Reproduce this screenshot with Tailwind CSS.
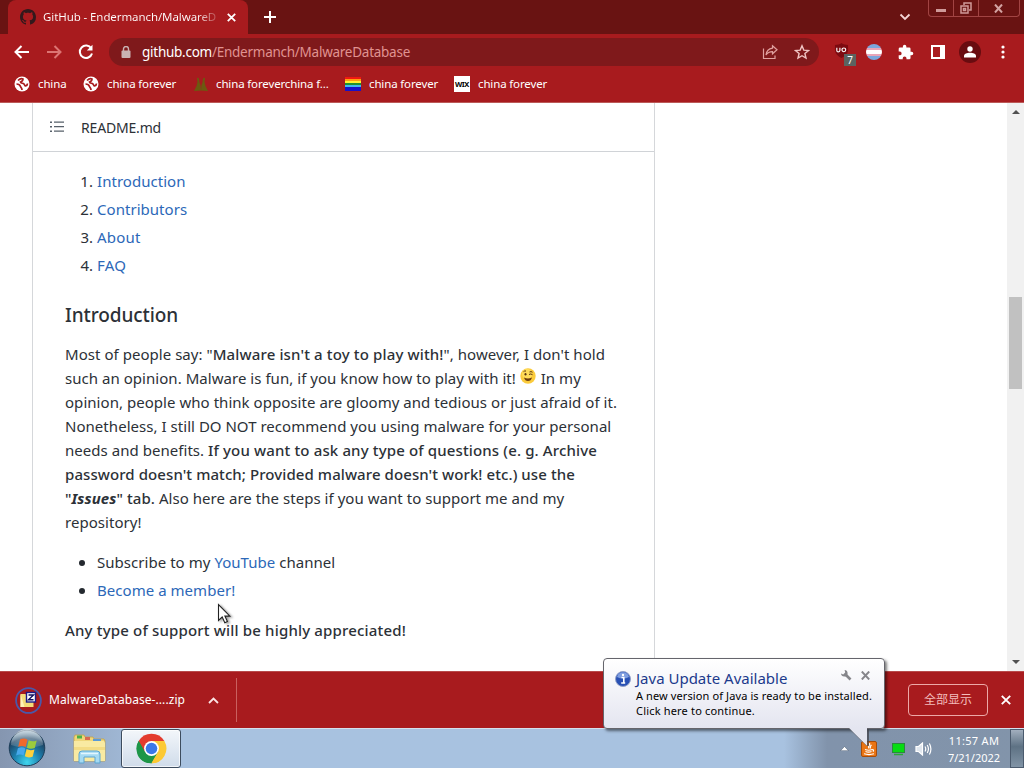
<!DOCTYPE html>
<html lang="en">
<head>
  <meta charset="UTF-8" />
  <meta name="viewport" content="width=device-width, initial-scale=1.0"/>
  <title>GitHub - Endermanch/MalwareDatabase</title>
  <script src="https://cdn.jsdelivr.net/npm/@tailwindcss/browser@4"></script>
</head>
<body class="w-[1024px] h-[768px] overflow-hidden bg-white font-['Noto_Sans','Noto_Sans_CJK_SC',sans-serif]">
  <div class="relative w-[1024px] h-[768px] flex flex-col overflow-hidden">

    <!-- Tab strip -->
    <div class="h-[34px] shrink-0 bg-[#691312] flex justify-between">
      <div class="flex">
        <div class="ml-2 w-[240px] h-[34px] bg-[#a81b1e] rounded-t-lg flex items-center pl-3">
          <svg class="size-4 shrink-0" viewBox="0 0 16 16" fill="#33191c"><path d="M8 0C3.58 0 0 3.58 0 8c0 3.54 2.29 6.53 5.47 7.59.4.07.55-.17.55-.38 0-.19-.01-.82-.01-1.49-2.01.37-2.53-.49-2.69-.94-.09-.23-.48-.94-.82-1.13-.28-.15-.68-.52-.01-.53.63-.01 1.08.58 1.23.82.72 1.21 1.87.87 2.33.66.07-.52.28-.87.51-1.07-1.78-.2-3.64-.89-3.64-3.95 0-.87.31-1.59.82-2.15-.08-.2-.36-1.02.08-2.12 0 0 .67-.21 2.2.82.64-.18 1.32-.27 2-.27s1.36.09 2 .27c1.53-1.04 2.2-.82 2.2-.82.44 1.1.16 1.92.08 2.12.51.56.82 1.27.82 2.15 0 3.07-1.87 3.75-3.65 3.95.29.25.54.73.54 1.48 0 1.07-.01 1.93-.01 2.2 0 .21.15.46.55.38A8.01 8.01 0 0 0 16 8c0-4.42-3.58-8-8-8z"/></svg>
          <div class="ml-[7px] w-[174px] whitespace-nowrap text-[11.5px] tracking-[-0.09px] bg-linear-to-r from-white from-88% to-white/20 bg-clip-text text-transparent">GitHub - Endermanch/MalwareD</div>
          <svg class="ml-[10px] size-[9px]" viewBox="0 0 9 9" stroke="#fff" stroke-width="1.8"><path d="M.8.8l7.4 7.4M8.2.8L.8 8.2"/></svg>
        </div>
        <svg class="ml-4 mt-[11px] size-3" viewBox="0 0 12 12" stroke="#fff" stroke-width="2"><path d="M6 0v12M0 6h12"/></svg>
      </div>
      <div class="flex">
        <svg class="mr-[17px] mt-[13px] w-3 h-[8px]" viewBox="0 0 12 8" fill="none" stroke="#f5d5d5" stroke-width="1.8"><path d="M1.5 1.5L6 6l4.500-4.500"/></svg>
        <div class="mr-1 h-[17px] w-[92px] flex border border-t-0 border-[#a24443] rounded-b">
          <div class="w-[25px] flex items-end justify-center pb-[4px] border-r border-[#a24443]"><div class="w-[10px] h-[3px] bg-[#cf9a99]"></div></div>
          <div class="w-[25px] flex items-center justify-center border-r border-[#a24443]">
            <svg class="size-[12px]" viewBox="0 0 12 12" fill="none" stroke="#cf9a99" stroke-width="1.500"><path d="M4 3V1h7v7H9M1 4h7v7H1zM3.500 6.500h2v2h-2z"/></svg>
          </div>
          <div class="flex-1 flex items-center justify-center pr-[2px]">
            <svg class="w-[9px] h-[9px]" viewBox="0 0 9 9" stroke="#d3a3a2" stroke-width="2"><path d="M1 .5l7 8M8 .5l-7 8"/></svg>
          </div>
        </div>
      </div>
    </div>

    <!-- Toolbar -->
    <div class="h-[36px] shrink-0 bg-[#a81b1e] flex items-center">
      <svg class="ml-[14px] w-[16px] h-[14px]" viewBox="0 0 16 14" fill="none" stroke="#fff" stroke-width="2"><path d="M15 7H2M7.500 1L1.500 7l6 6"/></svg>
      <svg class="ml-4 w-[16px] h-[14px]" viewBox="0 0 16 14" fill="none" stroke="#dc7573" stroke-width="2"><path d="M1 7h13M8.500 1l6 6-6 6"/></svg>
      <svg class="ml-4 size-4" viewBox="0 0 16 16" fill="none" stroke="#fff" stroke-width="2"><path d="M13.300 4.500A6.200 6.200 0 1 0 14 9.500"/><path d="M14.500.8v5.700H8.800z" fill="#fff" stroke="none"/></svg>
      <div class="ml-[15px] w-[710px] h-[28px] rounded-full bg-[#7f191b] flex items-center pl-3">
        <svg class="w-[10px] h-[13px]" viewBox="0 0 10 13"><rect y="4.500" x=".5" width="9" height="7.500" rx="1" fill="#c9b3b3"/><path d="M2.500 5V3a2.500 2.500 0 0 1 5 0v2" fill="none" stroke="#c9b3b3" stroke-width="1.400"/></svg>
        <div class="ml-[11px] text-[13.5px] tracking-[-0.258px] text-[#e09391] whitespace-nowrap grow"><span class="text-white">github.com</span>/Endermanch/MalwareDatabase</div>
        <svg class="size-4" viewBox="0 0 16 16" fill="none" stroke="#e0a09f" stroke-width="1.200"><path d="M1.500 4.500v10h11.500v-3"/><path d="M10.500 1.800l4.500 4-4.500 4V7.600C7.500 7.600 5.500 8.500 4 11c.4-3.500 2.500-6.200 6.500-6.800z"/></svg>
        <svg class="ml-4 mr-[9px] size-4" viewBox="0 0 16 16" fill="none" stroke="#f0c4c3" stroke-width="1.400"><path d="M8 1.800l1.800 4.300 4.700.4-3.600 3 1.100 4.600L8 11.700l-4 2.400 1.100-4.600-3.600-3 4.700-.4z"/></svg>
      </div>
      <div class="relative ml-[15px] size-[18px]">
        <svg class="size-[15px]" viewBox="0 0 16 16"><path d="M8 0c2 1.500 4.500 2 7 2v5c0 4.500-3 7-7 9-4-2-7-4.500-7-9V2c2.500 0 5-.5 7-2z" fill="#7d0a10"/><path d="M3 5v3q0 1.500 1.500 1.500T6.300 8V5" fill="none" stroke="#fff" stroke-width="1.200"/><circle cx="10.500" cy="7.300" r="2" fill="none" stroke="#fff" stroke-width="1.200"/></svg>
        <div class="absolute left-[10px] top-[11px] w-[12px] h-[12px] bg-[#5b6360] text-white text-[10px] leading-[12px] text-center">7</div>
      </div>
      <div class="ml-[14px] size-4 rounded-full overflow-hidden flex flex-col">
        <div class="flex-[4] bg-[#7ba6dc]"></div><div class="flex-[2] bg-[#e8a4b8]"></div><div class="flex-[3] bg-white"></div><div class="flex-[2] bg-[#e8a4b8]"></div><div class="flex-[4] bg-[#7ba6dc]"></div>
      </div>
      <svg class="ml-[16px] size-[16px]" viewBox="1 0 23 23" fill="#fff"><path d="M20.500 11H19V7a2 2 0 0 0-2-2h-4V3.500a2.500 2.500 0 0 0-5 0V5H4a2 2 0 0 0-2 2v3.800h1.500a2.700 2.700 0 0 1 0 5.400H2V20a2 2 0 0 0 2 2h3.800v-1.500a2.700 2.700 0 0 1 5.400 0V22H17a2 2 0 0 0 2-2v-4h1.500a2.500 2.500 0 0 0 0-5z"/></svg>
      <div class="ml-[17px] w-[14px] h-[14px] border-2 border-r-[5px] border-white"></div>
      <div class="ml-[14px] size-[22px] rounded-full bg-[#690c10] flex items-center justify-center">
        <svg class="size-[12px]" viewBox="0 0 12 12" fill="#fff"><circle cx="6" cy="3" r="2.700"/><path d="M0 11.500V10c0-2 3-3.200 6-3.200s6 1.200 6 3.200v1.500z"/></svg>
      </div>
      <svg class="ml-[20px] w-[4px] h-[14px]" viewBox="0 0 4 14" fill="#fff"><circle cx="2" cy="2" r="1.600"/><circle cx="2" cy="7" r="1.600"/><circle cx="2" cy="12" r="1.600"/></svg>
    </div>

    <!-- Bookmarks -->
    <div class="h-[33px] shrink-0 bg-[#a81b1e] border-b border-[#bb5a58] flex items-center pb-[4px] text-[11.5px] tracking-[-0.14px] text-white whitespace-nowrap">
      <svg class="ml-[14px] size-4" viewBox="0 0 16 16"><circle cx="8" cy="8" r="7.500" fill="#fff"/><path d="M4 4.500c2-2 4-2 5-1.500 0 2-1 2.500-2.500 3 .5 1.500 2 1 3.500 2 1 1 .5 2 1.500 2 1.500-.5 2-1.500 2-2.500M2.500 8c1.500 0 3.500 1 4 2.500S8 12 8 14" fill="none" stroke="#a81b1e" stroke-width="1.700"/></svg>
      <div class="ml-2 w-[45px]">china</div>
      <svg class="size-4" viewBox="0 0 16 16"><circle cx="8" cy="8" r="7.500" fill="#fff"/><path d="M4 4.500c2-2 4-2 5-1.500 0 2-1 2.500-2.500 3 .5 1.500 2 1 3.500 2 1 1 .5 2 1.500 2 1.500-.5 2-1.500 2-2.500M2.500 8c1.500 0 3.500 1 4 2.500S8 12 8 14" fill="none" stroke="#a81b1e" stroke-width="1.700"/></svg>
      <div class="ml-2 w-[86px]">china forever</div>
      <svg class="size-4" viewBox="0 0 16 16" fill="#6c5a10"><path d="M4 1.500l2 1 .5 4L7.500 9 8 14.500 1 15l2.500-5 1-4zM12 1.500l-2 1-.5 4L8.500 9 8 14.500l7 .5-2.500-5-1-4z"/></svg>
      <div class="ml-[7px] w-[129px]">china foreverchina f...</div>
      <div class="w-4 h-[14px] flex flex-col"><div class="flex-1 bg-[#f01810]"></div><div class="flex-1 bg-[#ff9c10]"></div><div class="flex-1 bg-[#fff030]"></div><div class="flex-1 bg-[#209030]"></div><div class="flex-1 bg-[#40b8f0]"></div><div class="flex-[2] bg-[#1810c8]"></div></div>
      <div class="ml-2 w-[85px]">china forever</div>
      <div class="size-4 bg-white text-black font-bold text-[7.5px] leading-4 text-center tracking-[-0.4px]">WIX</div>
      <div class="ml-2">china forever</div>
    </div>

    <!-- Page -->
    <div class="h-[568px] shrink-0 flex justify-between text-[#2c3137]">
      <div class="ml-8 w-[623px] border-x border-[#d5d7da]">
        <div class="h-[49px] border-b border-[#d0d3d7] flex items-center pl-4">
          <svg class="size-4" viewBox="0 0 16 16" fill="#57606a"><path d="M1 2.500h2v1.500H1zM1 7h2v1.500H1zM1 11.500h2V13H1zM5 2.500h10v1.300H5zM5 7h10v1.300H5zM5 11.500h10v1.300H5z"/></svg>
          <div class="ml-4 text-[14px] font-[450] tracking-[-0.18px]">README.md</div>
        </div>
        <div class="pl-8 pt-[15px] text-[15px] tracking-[0.04px] whitespace-nowrap">
          <div class="leading-7 flex flex-col text-[#2c68b8]">
            <div class="flex"><div class="w-8 pr-1 text-right text-[#2c3137]">1.</div>Introduction</div>
            <div class="flex"><div class="w-8 pr-1 text-right text-[#2c3137]">2.</div>Contributors</div>
            <div class="flex tracking-[0.2px]"><div class="w-8 pr-1 text-right text-[#2c3137] tracking-normal">3.</div>About</div>
            <div class="flex tracking-[0.3px]"><div class="w-8 pr-1 text-right text-[#2c3137] tracking-normal">4.</div>FAQ</div>
          </div>
          <h3 class="mt-[23px] text-[19px] leading-[26px] font-medium tracking-[-0.095px]">Introduction</h3>
          <div class="mt-[14px] leading-6">
            <div>Most of people say: "<b class="font-medium tracking-[0.14px]">Malware isn't a toy to play with!</b>", however, I don't hold</div>
            <div>such an opinion. Malware is fun, if you know how to play with it!
              <svg class="inline-block size-4 align-[0px] mr-[1px]" viewBox="0 0 16 16">
                <circle cx="8" cy="8" r="7.700" fill="#fbcb3c"/><circle cx="7" cy="6" r="5" fill="#ffdc5a"/>
                <path d="M4 9.500q4 2 8 0-1 3.500-4 3.500T4 9.500z" fill="#6b3d10"/><ellipse cx="5.500" cy="6.300" rx="1" ry="1.300" fill="#5a3410"/><path d="M9 6.500q1.800-1.200 3.500.2M3.500 3.700q1-1 2.500-.7M9.500 4q1.500-.8 3 .2" fill="none" stroke="#5a3410" stroke-width="1"/>
              </svg>
              In my</div>
            <div>opinion, people who think opposite are gloomy and tedious or just afraid of it.</div>
            <div>Nonetheless, I still <b class="font-[450] tracking-normal">DO NOT</b> recommend you using malware for your personal</div>
            <div>needs and benefits. <b class="font-medium tracking-[0.14px]">If you want to ask any type of questions (e. g. Archive</b></div>
            <div><b class="font-medium tracking-[0.08px]">password doesn't match; Provided malware doesn't work! etc.) use the</b></div>
            <div><b class="font-medium tracking-[0.075px]">"<i class="font-bold">Issues</i>" tab.</b> Also here are the steps if you want to support me and my</div>
            <div>repository!</div>
          </div>
          <ul class="mt-[14px] leading-7 pl-8">
            <li class="relative"><span class="absolute -left-[18px] top-[12px] size-[6px] rounded-full bg-[#24292f]"></span>Subscribe to my <span class="text-[#2c68b8]">YouTube</span> channel</li>
            <li class="relative text-[#2c68b8]"><span class="absolute -left-[18px] top-[12px] size-[6px] rounded-full bg-[#24292f]"></span>Become a member!</li>
          </ul>
          <div class="mt-[14px] leading-6 font-medium tracking-[0.17px]">Any type of support will be highly appreciated!</div>
        </div>
      </div>
      <div class="w-[17px] bg-[#f1f1f1] flex flex-col items-center justify-between py-[7px]">
        <svg class="w-[8px] h-[4px]" viewBox="0 0 8 4" fill="#505050"><path d="M0 4l4-4 4 4z"/></svg>
        <div class="mt-[72px] mb-[160px] w-[13px] h-[92px] bg-[#c1c1c1]"></div>
        <svg class="w-[8px] h-[4px]" viewBox="0 0 8 4" fill="#505050"><path d="M0 0l4 4 4-4z"/></svg>
      </div>
    </div>

    <!-- Downloads bar -->
    <div class="h-[57px] shrink-0 bg-[#a81b1e] border-t border-[#b84a4a] flex items-center whitespace-nowrap text-white">
      <svg class="ml-[15px] size-[27px]" viewBox="0 0 27 27">
        <circle cx="13.500" cy="13.500" r="12.400" fill="none" stroke="#4a58a8" stroke-width="1.800"/>
        <path d="M5.500 7h5l1 1.500h7V20h-13z" fill="#f4dc78"/><path d="M5.500 7v13h4z" fill="#fff3b8"/>
        <rect x="11.500" y="5.500" width="9" height="9.500" fill="#fff" stroke="#1c1c88" stroke-width="1.400"/>
        <path d="M13.500 8h5l-5 4.800h5" fill="none" stroke="#101060" stroke-width="1.400"/>
      </svg>
      <div class="ml-[7px] w-[159px] text-[12px] tracking-[0.07px]">MalwareDatabase-....zip</div>
      <svg class="w-[11px] h-[7px]" viewBox="0 0 11 7" fill="none" stroke="#fbe4e4" stroke-width="1.800"><path d="M1 6l4.500-4.500L10 6"/></svg>
      <div class="ml-[17px] w-px h-[44px] bg-[#c9605f]"></div>
      <div class="ml-auto w-[80px] h-[32px] rounded border border-[#eda9a8] text-[12px] leading-[30px] text-center text-[#f3bdbc]">全部显示</div>
      <svg class="ml-[13px] mr-[13px] size-[10px]" viewBox="0 0 10 10" stroke="#fff" stroke-width="1.900"><path d="M.8.8l8.400 8.400M9.200.8L.8 9.200"/></svg>
    </div>

    <!-- Taskbar -->
    <div class="h-[40px] shrink-0 border-t border-[#d5e0ee] bg-linear-to-r from-[#8596b0] from-0% via-[#a8c2e0] via-16% to-[#a8c2e0] flex">
      <svg class="ml-[8px] size-[38px]" viewBox="0 0 38 38">
        <defs>
          <radialGradient id="orb" cx=".5" cy=".9" r=".85"><stop offset="0" stop-color="#3fd6ee"/><stop offset=".45" stop-color="#1c7fae"/><stop offset=".8" stop-color="#1d4565"/><stop offset="1" stop-color="#6f93ac"/></radialGradient>
          <linearGradient id="gloss" x2="0" y2="1"><stop offset="0" stop-color="#fff" stop-opacity=".65"/><stop offset="1" stop-color="#fff" stop-opacity=".1"/></linearGradient>
        </defs>
        <circle cx="19" cy="19" r="17.800" fill="url(#orb)" stroke="#1d3d58"/>
        <path d="M3 16a16 16 0 0 1 32 0q-16 6-32 0z" fill="url(#gloss)"/>
        <path d="M12 10.500q4-2 7.500.200L17.700 18q-3.500-2-7.500-.2z" fill="#f0682c"/><path d="M20.700 11.300q3.500 2 8 .2L26.800 19q-4.300 1.700-7.900-.3z" fill="#9ccb3c"/>
        <path d="M9.900 19.200q4-1.800 7.500.2l-1.800 7.200q-3.500-2-7.500-.2z" fill="#47a8ec"/><path d="M18.600 20.100q3.600 2 7.900.3l-1.900 7.300q-4.200 1.700-7.800-.4z" fill="#fdd03c"/>
      </svg>
      <svg class="ml-[26px] mt-[5px] w-[35px] h-[31px]" viewBox="0 0 35 31">
        <path d="M2 3l1-2h9l1 2h8l1 2h10l1 2v20H2z" fill="#efd67a" stroke="#c2a24a" stroke-width=".8"/>
        <path d="M5 1.500h5v3H5z" fill="#4ab04a"/><path d="M13 3h5v3h-5z" fill="#d86a50"/><path d="M21 5h8v2h-8z" fill="#5a9ad8"/>
        <path d="M2 7h30l1 2v18H2z" fill="#f9eaa2"/><path d="M2 13h31v3H2z" fill="#f3dc85"/>
        <path d="M7 29V20q0-3 3-3h15q3 0 3 3v9h-5v-6H12v6z" fill="#a5daf2" stroke="#5aa5d2"/><path d="M9 19.500h17" stroke="#e3f6ff" stroke-width="1.500"/>
      </svg>
      <div class="ml-[14px] w-[60px] h-[39px] border border-[#3d4c5e] rounded-[3px] bg-linear-to-b from-[#f3f6fa] to-[#d0dcea] shadow-[inset_0_0_0_1px_#ffffffb0] flex items-center justify-center">
        <svg class="size-[31px]" viewBox="0 0 48 48">
          <path d="M24 24L4.080 12.500A23 23 0 0 1 43.920 12.500z" fill="#e33b2e"/>
          <path d="M24 24L43.920 12.500A23 23 0 0 1 24 47z" fill="#fcc934"/>
          <path d="M24 24L24 47A23 23 0 0 1 4.080 12.500z" fill="#1e9648"/>
          <path d="M24 12.500h19.920L34 29.750z" fill="#fcc934"/><path d="M34 29.750L24 47 14.040 29.750z" fill="#1e9648"/><path d="M34 29.750L24 47l6-1q10-3 14-12l-4-10z" fill="#fcc934"/><path d="M4.080 12.500L14.040 29.750 24 12.500z" fill="#e33b2e"/><path d="M4.080 12.500L14.040 29.750 24 47Q1 45 1 24q0-6 3.080-11.500z" fill="#1e9648"/>
          <circle cx="24" cy="24" r="11.500" fill="#fff"/><circle cx="24" cy="24" r="9" fill="#3b78e8"/>
        </svg>
      </div>
      <div class="ml-auto w-[240px] bg-linear-to-r from-[#a8c2e0] via-[#8193ab] via-18% to-[#8294aa] flex items-center text-white">
        <svg class="ml-[56px] w-[9px] h-[5px]" viewBox="0 0 9 5"><path d="M.5 4.700L4.500.5l4 4.200z" fill="#fff" stroke="#47566a" stroke-width=".5"/></svg>
        <div class="ml-[12px] size-4 rounded-[2px] border border-[#a84c08] bg-[#ea7514] flex items-center justify-center">
          <svg class="size-[14px]" viewBox="0 0 14 14" fill="none" stroke="#fff" stroke-width="1.200"><path d="M7.500 1C9 3 5 4 7 6.500M9.500 3Q7.500 4.500 8.500 6.500M3 7.500q4 1.500 7 0M3.500 9.500q3 1.200 6 0M2 11.800q5 1.500 10 0M10 7.500q2.500 0 1 2.200"/></svg>
        </div>
        <svg class="ml-[15px] w-[13px] h-[14px]" viewBox="0 0 13 14"><rect x=".5" y="1.500" width="12" height="9" fill="#07dc12" stroke="#2a8a3a"/><path d="M2 12.500h9" stroke="#2aa838" stroke-width="1.500"/></svg>
        <svg class="ml-[10px] w-[17px] h-[14px]" viewBox="0 0 17 14" fill="none" stroke="#fff" stroke-width="1.200"><path d="M1 4.500h2.500L7.500 1v12L3.500 9.500H1z" fill="#dfe6ee" stroke="#fff"/><path d="M10 4.500q1.500 2.500 0 5M12.200 3q2.500 4 0 8M14.400 1.500q3 5.500 0 11"/></svg>
        <div class="ml-[15px] w-[54px] text-[11px] leading-[17px] text-center whitespace-nowrap pt-px"><div class="tracking-[0.3px]">11:57 AM</div><div>7/21/2022</div></div>
        <div class="ml-auto w-[14px] h-full border border-[#4b5b6e] bg-linear-to-b from-[#a2afbe] via-[#5e7284] via-45% to-[#8194a6]"></div>
      </div>
    </div>

    <!-- Tray balloon -->
    <div class="absolute left-[603px] top-[658px] w-[282px] h-[71px] border border-[#65656c] rounded-[4px] bg-linear-to-b from-white to-[#e4e5f0] shadow-[2px_2px_3px_#00000080] pl-[11px] pt-[10px] whitespace-nowrap">
      <div class="flex items-center h-[19px]">
        <svg class="size-4" viewBox="0 0 16 16"><circle cx="8" cy="8" r="7.500" fill="#2850b4" stroke="#93a1c8"/><path d="M2 6a6.200 6.200 0 0 1 12 0q-6 3-12 0z" fill="#7f9ee0"/><path d="M6.500 6.500h2.300V12M6.200 12h4" fill="none" stroke="#fff" stroke-width="1.600"/><circle cx="8" cy="3.900" r="1.200" fill="#fff"/></svg>
        <div class="ml-[5px] w-[205px] text-[15px] leading-[19px] text-[#1c3a8c]">Java Update Available</div>
        <svg class="mb-[6px] size-[11px]" viewBox="0 0 11 11"><path d="M4.500 4.500l5 5" stroke="#85858a" stroke-width="2.600"/><path d="M3.600 0A3.300 3.300 0 1 1 0 3.600l2.200.8 2-1.900z" fill="#85858a"/></svg>
        <svg class="ml-[9px] mb-[6px] size-[9px]" viewBox="0 0 9 9" stroke="#85858a" stroke-width="1.900"><path d="M.8.5l7.400 8M8.200.5l-7.400 8"/></svg>
      </div>
      <div class="pl-[21px] text-[11px] leading-[15px] text-black">
        <div class="tracking-[0.109px]">A new version of Java is ready to be installed.</div>
        <div class="tracking-[0.18px]">Click here to continue.</div>
      </div>
    </div>
    <svg class="absolute left-[846px] top-[728px] w-[26px] h-[21px]" viewBox="0 0 26 21"><path d="M3 0l18 18V0z" fill="#e4e5f0"/><path d="M3 .5L21 18" fill="none" stroke="#65656c" stroke-opacity=".5"/><path d="M22 1v17" stroke="#45454c" stroke-width="1.500"/></svg>

    <!-- Mouse pointer -->
    <svg class="absolute left-[217px] top-[603px] w-[15px] h-[22px] drop-shadow-[2px_1px_1px_#00000060]" viewBox="0 0 15 22"><path d="M1.500 1.500v16l3.700-3.500 2.600 5.800 2.600-1.200-2.500-5.500h5z" fill="#fff" stroke="#222" stroke-width="1.100"/></svg>
  </div>
</body>
</html>
